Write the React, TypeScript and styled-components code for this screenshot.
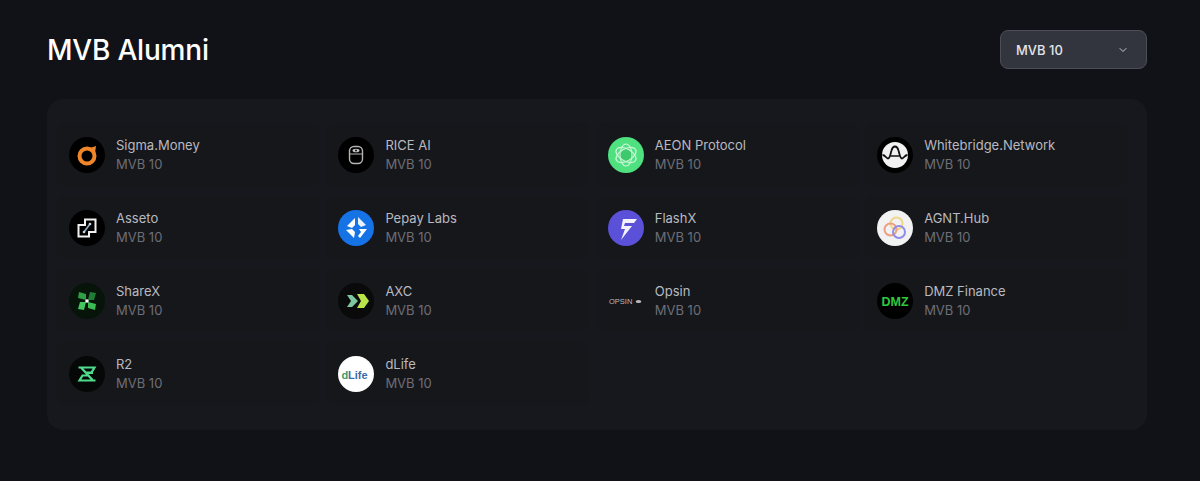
import styled, { createGlobalStyle } from "styled-components";
import { ReactNode } from "react";
import { LuChevronDown } from "react-icons/lu";

const GlobalStyle = createGlobalStyle`
  html, body {
    margin: 0;
    height: 100%;
    background: #111218;
  }
  body {
    font-family: "Inter", "Liberation Sans", sans-serif;
  }
`;

const OpsinMark = styled.text`
  font-family: "Liberation Sans", sans-serif;
  font-size: 7.5px;
  fill: #bbb;
`;

const DmzMark = styled.text`
  font-family: "Liberation Sans", sans-serif;
  font-size: 12.5px;
  font-weight: 700;
  fill: #2fc93f;
  text-anchor: middle;
`;

const DLifeMark = styled.text`
  font-family: "Liberation Sans", sans-serif;
  font-size: 11px;
  font-weight: 700;
`;

const LOGOS: { name: string; logo: ReactNode; bg: string }[] = [
  {
    name: "Sigma.Money",
    bg: "#000",
    logo: (
      <>
        <circle cx="18" cy="19" r="7.5" fill="none" stroke="#f0862a" strokeWidth="4" />
        <path d="M21 11l6-2-1 7z" fill="#f0862a" />
      </>
    ),
  },
  {
    name: "RICE AI",
    bg: "#000",
    logo: (
      <>
        <rect x="11.5" y="9.5" width="13" height="17" rx="4.5" fill="none" stroke="#b5b5b5" strokeWidth="1.4" />
        <path d="M12 17h12" stroke="#b5b5b5" strokeWidth="1.2" />
        <ellipse cx="18" cy="13.5" rx="3.5" ry="1.8" fill="#c8c8c8" />
        <circle cx="18" cy="13.5" r="1" fill="#111" />
      </>
    ),
  },
  {
    name: "AEON Protocol",
    bg: "#4fe07f",
    logo: (
      <>
        <path d="M18 10l7.5 5.5-3 8.5h-9l-3-8.5z" fill="#3fc96e" />
        <ellipse cx="18" cy="18" rx="11" ry="6" fill="none" stroke="#c8f7d6" strokeWidth="1.3" transform="rotate(30 18 18)" />
        <ellipse cx="18" cy="18" rx="11" ry="6" fill="none" stroke="#c8f7d6" strokeWidth="1.3" transform="rotate(-30 18 18)" />
        <ellipse cx="18" cy="18" rx="6" ry="11" fill="none" stroke="#c8f7d6" strokeWidth="1.1" />
      </>
    ),
  },
  {
    name: "Whitebridge.Network",
    bg: "#000",
    logo: (
      <>
        <circle cx="18" cy="18" r="13" fill="#f2f2f2" />
        <path d="M5.5 18c3 0 3.5 3.5 5.5 3.5 2 0 2.5-5 3.5-8 .7-2.5 1.3-4 3.500-4s2.800 1.500 3.500 4c1 3 1.500 8 3.500 8s2.500-3.500 5.500-3.500" fill="none" stroke="#111" strokeWidth="1.8" />
        <path d="M13.5 19h9" stroke="#111" strokeWidth="1.4" />
      </>
    ),
  },
  {
    name: "Asseto",
    bg: "#000",
    logo: (
      <>
        <path d="M16 9.5h10.5V22H20v4.5H9.5V15H16z" fill="none" stroke="#f1f1f1" strokeWidth="2" />
        <path d="M15 22l6-8" stroke="#8fb0c8" strokeWidth="1.5" />
        <circle cx="21" cy="14" r="1.3" fill="#c8d8e6" />
        <circle cx="15" cy="22" r="1.3" fill="#c8d8e6" />
      </>
    ),
  },
  {
    name: "Pepay Labs",
    bg: "#1673e6",
    logo: (
      <>
        <path d="M17 8l-8 8 5 2 3-3z" fill="#fff" />
        <path d="M20 7l8 8-5 2-3-3z" fill="#e8f2ff" />
        <path d="M8 20l8 8 1-6-3-3z" fill="#fff" />
        <path d="M29 19l-8 0 2 3-3 4 2 2z" fill="#fff" />
      </>
    ),
  },
  {
    name: "FlashX",
    bg: "#5b50d8",
    logo: <path d="M15 9h14l-3 4h-9l-1 3h8L13 30l4-11h-4z" fill="#f4f2ff" />,
  },
  {
    name: "AGNT.Hub",
    bg: "#f3f2f2",
    logo: (
      <>
        <circle cx="19.5" cy="13.5" r="6" fill="none" stroke="#efd68a" strokeWidth="2" />
        <circle cx="13.5" cy="19.5" r="6" fill="none" stroke="#ef9f80" strokeWidth="2" />
        <circle cx="22" cy="22" r="6" fill="none" stroke="#8f8de8" strokeWidth="2" />
      </>
    ),
  },
  {
    name: "ShareX",
    bg: "#06140a",
    logo: (
      <>
        <path d="M17 17L9 15l1-6 7 2z" fill="#2f9e44" />
        <path d="M19 17l2-8 6 1-2 7z" fill="#1f7d35" />
        <path d="M19 19l8 2-1 6-7-2z" fill="#3cbb55" />
        <path d="M17 19l-2 8-6-1 2-7z" fill="#45c75f" />
        <circle cx="18" cy="18" r="1.8" fill="#fff" />
      </>
    ),
  },
  {
    name: "AXC",
    bg: "#0a0a0a",
    logo: (
      <>
        <path d="M19 11h7l5 7-5 7h-7l4-7z" fill="#b9e34a" />
        <path d="M9 12h5l6 6-6 6H9l4-6z" fill="#7dc7a0" />
      </>
    ),
  },
  {
    name: "Opsin",
    bg: "transparent",
    logo: (
      <>
        <OpsinMark x="1" y="20.5">OPSIN</OpsinMark>
        <ellipse cx="30.5" cy="18.5" rx="2.8" ry="1.5" fill="#bbb" />
      </>
    ),
  },
  {
    name: "DMZ Finance",
    bg: "#000",
    logo: <DmzMark x="18" y="23">DMZ</DmzMark>,
  },
  {
    name: "R2",
    bg: "#050807",
    logo: (
      <path d="M9.5 11.5h16l-3 5h-5M26.5 24.5h-16l3-5h5M12 11.5l12 13M18 17h6" fill="none" stroke="#4fdc8c" strokeWidth="2.2" />
    ),
  },
  {
    name: "dLife",
    bg: "#fff",
    logo: (
      <>
        <DLifeMark x="3.5" y="22.5" fill="#3f9a6a">d</DLifeMark>
        <DLifeMark x="10" y="22.5" fill="#3f6aa8">Life</DLifeMark>
      </>
    ),
  },
];

const App = () => {
  return (
    <>
      <GlobalStyle />
      <Page>
        <Header>
          <Title>MVB Alumni</Title>
          <Select>
            <SelectLabel>MVB 10</SelectLabel>
            <LuChevronDown size={12} color="#c9cad0" />
          </Select>
        </Header>
        <Panel>
          <Grid>
            {LOGOS.map((item) => (
              <Card key={item.name}>
                <LogoSvg viewBox="0 0 36 36" $bg={item.bg}>
                  {item.logo}
                </LogoSvg>
                <Info>
                  <Name>{item.name}</Name>
                  <Batch>MVB 10</Batch>
                </Info>
              </Card>
            ))}
          </Grid>
        </Panel>
      </Page>
    </>
  );
};

export default App;

const Page = styled.div`
  box-sizing: border-box;
  width: 1200px;
  height: 481px;
  padding: 30px 53px 51px 47px;
  background: #111218;
  overflow: hidden;
`;

const Header = styled.div`
  display: flex;
  align-items: center;
  justify-content: space-between;
  height: 39px;
  margin-bottom: 30px;
`;

const Title = styled.h1`
  margin: 0;
  font-size: 28px;
  font-weight: 500;
  color: #fff;
  letter-spacing: -0.2px;
`;

const Select = styled.div`
  box-sizing: border-box;
  display: flex;
  align-items: center;
  justify-content: space-between;
  width: 147px;
  height: 39px;
  padding: 0 17px 0 15px;
  border: 1px solid #4b4d57;
  border-radius: 8px;
  background: #33353e;
`;

const SelectLabel = styled.span`
  font-size: 13px;
  font-weight: 500;
  color: #e4e4ea;
`;

const Panel = styled.div`
  box-sizing: border-box;
  height: 331px;
  padding: 23px 19px 0 10px;
  border-radius: 16px;
  background: #17181d;
`;

const Grid = styled.div`
  display: grid;
  grid-template-columns: repeat(4, 1fr);
  grid-auto-rows: 65px;
  gap: 8px 6.5px;
`;

const Card = styled.div`
  display: flex;
  align-items: center;
  gap: 11px;
  padding: 0 12px;
  border-radius: 10px;
  background: #16171b;
`;

const LogoSvg = styled.svg<{ $bg: string }>`
  flex: none;
  width: 36px;
  height: 36px;
  border-radius: 50%;
  background: ${(p) => p.$bg};
`;

const Info = styled.div`
  display: flex;
  flex-direction: column;
  gap: 2px;
`;

const Name = styled.div`
  font-size: 13px;
  line-height: 17px;
  color: #b9bac0;
`;

const Batch = styled.div`
  font-size: 13px;
  line-height: 17px;
  color: #6d6e76;
`;
